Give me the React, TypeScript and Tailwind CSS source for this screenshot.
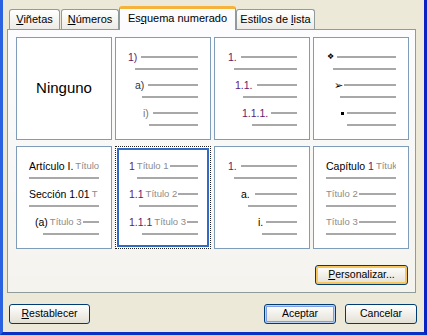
import React from "react"

// Lineas grises de muestra dentro de cada celda
function Ln({ className = "" }: { className?: string }) {
  return <div className={`h-[2px] bg-[#A8A8A8] ${className}`} />
}

function Row({ className = "", children }: { className?: string; children: React.ReactNode }) {
  return (
    <div className={`flex items-center h-[14px] whitespace-nowrap overflow-hidden ${className}`}>
      {children}
    </div>
  )
}

function Cell({ selected = false, children }: { selected?: boolean; children: React.ReactNode }) {
  return (
    <div
      className={`w-[96px] h-[103px] bg-white ${
        selected
          ? "border border-dotted border-[#222] shadow-[inset_0_0_0_1px_#fff,inset_0_0_0_3px_#316AC5]"
          : "border border-[#7F9DB9]"
      }`}
    >
      <div className="pt-[12px] pr-[12px] text-[10.5px] leading-none">{children}</div>
    </div>
  )
}

const gray = "text-[9.5px] text-[#8C8C8C]"

export default function App() {
  return (
    <div className="w-[427px] h-[335px] bg-[#ECE9D8] border-l-[3px] border-l-[#2A62E0] border-r-[3px] border-r-[#0A22C2] border-b-[3px] border-b-[#0A30C4] flex flex-col font-['Liberation_Sans',Arial,sans-serif] text-black">
      <div className="pl-[4px] pr-[8px]">
        {/* pestañas */}
        <div className="flex items-end h-[29px] pl-[2px] text-[11px]">
          <div className="w-[51px] h-[20px] border border-b-0 border-[#919B9C] rounded-t-[3px] bg-gradient-to-b from-white to-[#ECEBE6] flex items-center justify-center">
            <span><span className="underline">V</span>iñetas</span>
          </div>
          <div className="ml-px w-[58px] h-[20px] border border-b-0 border-[#919B9C] rounded-t-[3px] bg-gradient-to-b from-white to-[#ECEBE6] flex items-center justify-center">
            <span><span className="underline">N</span>úmeros</span>
          </div>
          <div className="relative z-10 -mb-px w-[117px] h-[24px] border border-b-0 border-[#919B9C] border-t-[3px] border-t-[#F5B33B] rounded-t-[3px] bg-[#FCFCFE] flex items-center justify-center pb-[2px]">
            <span>Es<span className="underline">q</span>uema numerado</span>
          </div>
          <div className="w-[79px] h-[20px] border border-b-0 border-[#919B9C] rounded-t-[3px] bg-gradient-to-b from-white to-[#ECEBE6] flex items-center justify-center">
            <span>Estilos de <span className="underline">l</span>ista</span>
          </div>
        </div>

        {/* panel */}
        <div className="h-[264px] border border-[#919B9C] bg-gradient-to-b from-[#FCFCFE] to-[#F4F3EE] flex flex-col pt-[7px] pl-[8px] pr-[7px]">
          <div className="grid grid-cols-[96px_96px_96px_96px] grid-rows-[103px_103px] gap-x-[3px] gap-y-[6px]">
            <div className="w-[96px] h-[103px] bg-white border border-[#7F9DB9] flex items-center justify-center text-[15px]">
              Ninguno
            </div>

            <Cell>
              <Row className="pl-[12px]"><span className="text-[#5E1A6E]">1)</span><Ln className="flex-1 ml-[4px]" /></Row>
              <Ln className="ml-[19px] mt-[4px] mb-[8px]" />
              <Row className="pl-[19px]"><span className="text-[#333]">a)</span><Ln className="flex-1 ml-[4px]" /></Row>
              <Ln className="ml-[26px] mt-[4px] mb-[8px]" />
              <Row className="pl-[27px]"><span className="text-[#777]">i)</span><Ln className="flex-1 ml-[4px]" /></Row>
              <Ln className="ml-[33px] mt-[4px]" />
            </Cell>

            <Cell>
              <Row className="pl-[13px]"><span className="text-[#5E1A6E]">1.</span><Ln className="flex-1 ml-[4px]" /></Row>
              <Ln className="ml-[19px] mt-[4px] mb-[8px]" />
              <Row className="pl-[20px]"><span className="text-[#5E1A6E]">1.1.</span><Ln className="flex-1 ml-[4px]" /></Row>
              <Ln className="ml-[28px] mt-[4px] mb-[8px]" />
              <Row className="pl-[27px]"><span className="text-[#5E1A6E]">1.1.1.</span><Ln className="flex-1 ml-[3px]" /></Row>
              <Ln className="ml-[37px] mt-[4px]" />
            </Cell>

            <Cell>
              <Row className="pl-[13px]"><span className="font-['DejaVu_Sans',sans-serif] text-[8px]">❖</span><Ln className="flex-1 ml-[3px]" /></Row>
              <Ln className="ml-[19px] mt-[4px] mb-[8px]" />
              <Row className="pl-[20px]"><span className="font-['DejaVu_Sans',sans-serif] text-[11px]">➢</span><Ln className="flex-1 ml-[1px]" /></Row>
              <Ln className="ml-[26px] mt-[4px] mb-[8px]" />
              <Row className="pl-[27px]"><span className="w-[3px] h-[3px] bg-black" /><Ln className="flex-1 ml-[3px]" /></Row>
              <Ln className="ml-[33px] mt-[4px]" />
            </Cell>

            <Cell>
              <Row className="pl-[12px]"><span className="shrink-0">Artículo I.</span><span className={`shrink-0 ml-[2px] ${gray}`}>Título</span></Row>
              <Ln className="ml-[12px] mt-[4px] mb-[8px]" />
              <Row className="pl-[12px]"><span className="shrink-0">Sección 1.01</span><span className={`shrink-0 ml-[2px] ${gray}`}>T</span></Row>
              <Ln className="ml-[12px] mt-[4px] mb-[8px]" />
              <Row className="pl-[18px]"><span className="shrink-0">(a)</span><span className={`shrink-0 ml-[2px] ${gray}`}>Título 3</span><Ln className="flex-1 ml-[1px]" /></Row>
              <Ln className="ml-[26px] mt-[4px]" />
            </Cell>

            <Cell selected>
              <Row className="pl-[13px]"><span className="text-[#5E1A6E] shrink-0">1</span><span className={`shrink-0 ml-[2px] ${gray}`}>Título 1</span><Ln className="flex-1 ml-[1px]" /></Row>
              <Ln className="ml-[21px] mt-[4px] mb-[8px]" />
              <Row className="pl-[13px]"><span className="text-[#5E1A6E] shrink-0">1.1</span><span className={`shrink-0 ml-[2px] ${gray}`}>Título 2</span><Ln className="flex-1 ml-[1px]" /></Row>
              <Ln className="ml-[23px] mt-[4px] mb-[8px]" />
              <Row className="pl-[13px]"><span className="text-[#5E1A6E] shrink-0">1.1.1</span><span className={`shrink-0 ml-[2px] ${gray}`}>Título 3</span><Ln className="flex-1 ml-[1px]" /></Row>
              <Ln className="ml-[26px] mt-[4px]" />
            </Cell>

            <Cell>
              <Row className="pl-[13px]"><span className="text-[#5E1A6E]">1.</span><Ln className="flex-1 ml-[4px]" /></Row>
              <Ln className="ml-[19px] mt-[4px] mb-[8px]" />
              <Row className="pl-[26px]"><span>a.</span><Ln className="flex-1 ml-[5px]" /></Row>
              <Ln className="ml-[33px] mt-[4px] mb-[8px]" />
              <Row className="pl-[43px]"><span>i.</span><Ln className="flex-1 ml-[3px]" /></Row>
              <Ln className="ml-[47px] mt-[4px]" />
            </Cell>

            <Cell>
              <Row className="pl-[12px]"><span className="shrink-0">Capítulo <span className="text-[#5E1A6E]">1</span></span><span className={`shrink-0 ml-[2px] ${gray}`}>Títuk</span></Row>
              <Ln className="ml-[12px] mt-[4px] mb-[8px]" />
              <Row className="pl-[12px]"><span className={`shrink-0 ${gray}`}>Título 2</span><Ln className="flex-1 ml-[1px]" /></Row>
              <Ln className="ml-[12px] mt-[4px] mb-[8px]" />
              <Row className="pl-[12px]"><span className={`shrink-0 ${gray}`}>Título 3</span><Ln className="flex-1 ml-[1px]" /></Row>
              <Ln className="ml-[12px] mt-[4px]" />
            </Cell>
          </div>

          <div className="flex justify-end mt-[16px]">
            <button className="w-[93px] h-[20px] rounded-[3px] border border-[#003C74] bg-gradient-to-b from-white to-[#E3E0D5] shadow-[inset_0_0_0_2px_#F8C45C] text-[10.5px]">
              <span className="underline">P</span>ersonalizar...
            </button>
          </div>
        </div>
      </div>

      {/* botones inferiores */}
      <div className="flex items-center mt-[11px] pl-[6px] pr-[7px] text-[10.5px]">
        <button className="w-[81px] h-[20px] rounded-[3px] border border-[#003C74] bg-gradient-to-b from-white to-[#E3E0D5]">
          <span className="underline">R</span>establecer
        </button>
        <div className="flex-1" />
        <button className="w-[72px] h-[20px] rounded-[3px] border border-[#003C74] bg-gradient-to-b from-white to-[#E3E0D5] shadow-[inset_0_0_0_1px_#B9D1F5,inset_0_0_0_2px_#7E9FE8]">
          Aceptar
        </button>
        <button className="ml-[9px] w-[72px] h-[20px] rounded-[3px] border border-[#003C74] bg-gradient-to-b from-white to-[#E3E0D5]">
          Cancelar
        </button>
      </div>
    </div>
  )
}
